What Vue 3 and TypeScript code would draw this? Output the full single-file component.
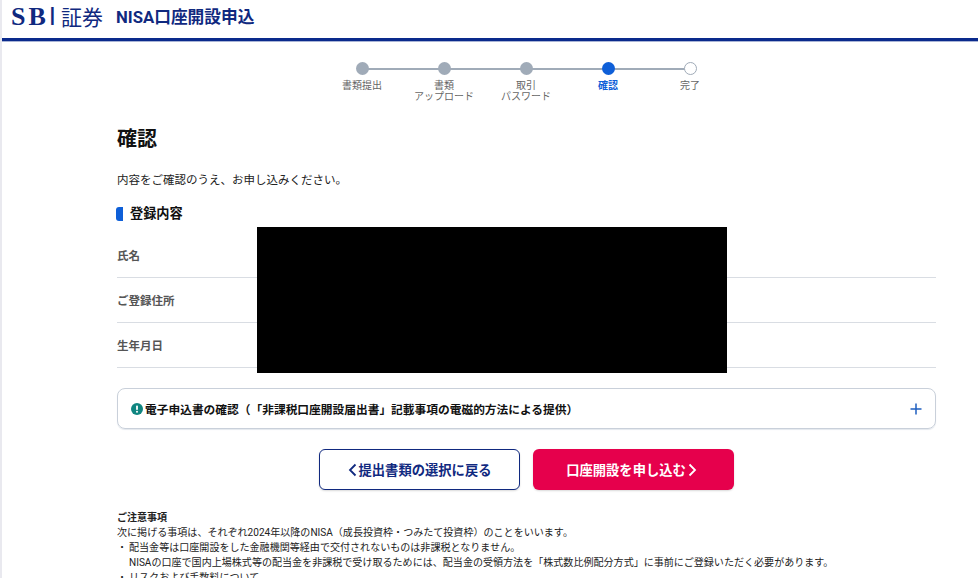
<template>
  <div class="page">
    <header class="site-header">
      <div class="logo">
        <span class="logo__sbi">SB<span class="logo__i">I</span></span>
        <span class="logo__sec">証券</span>
      </div>
      <span class="site-header__title">NISA口座開設申込</span>
    </header>

    <nav class="stepper">
      <div v-for="(step, i) in steps" :key="i" class="step" :class="step.state">
        <span class="step__dot"></span>
        <span class="step__label">
          <template v-for="(line, j) in step.lines" :key="j">{{ line }}<br /></template>
        </span>
      </div>
    </nav>

    <main class="content">
      <h1 class="content__title">確認</h1>
      <p class="content__lead">内容をご確認のうえ、お申し込みください。</p>
      <h2 class="section-title">登録内容</h2>

      <dl class="info">
        <div v-for="row in rows" :key="row" class="info__row">
          <dt>{{ row }}</dt>
          <dd></dd>
        </div>
        <div class="info__mask"></div>
      </dl>

      <div class="accordion">
        <svg class="accordion__icon" width="12" height="12" viewBox="0 0 12 12">
          <circle cx="6" cy="6" r="6" fill="#0f8580" />
          <rect x="5.1" y="2.4" width="1.8" height="4.6" rx=".8" fill="#fff" />
          <circle cx="6" cy="8.7" r="1" fill="#fff" />
        </svg>
        <span class="accordion__text">電子申込書の確認（「非課税口座開設届出書」記載事項の電磁的方法による提供）</span>
        <svg class="accordion__plus" width="12" height="12" viewBox="0 0 12 12">
          <path d="M6 .5v11M.5 6h11" stroke="#1f5fc0" stroke-width="1.5" fill="none" />
        </svg>
      </div>

      <div class="actions">
        <button class="btn btn--back">
          <svg width="9" height="14" viewBox="0 0 9 14"><path d="M7.5 1.5 2 7l5.5 5.5" stroke="#10297f" stroke-width="1.8" fill="none" /></svg>
          提出書類の選択に戻る
        </button>
        <button class="btn btn--apply">
          口座開設を申し込む
          <svg width="9" height="14" viewBox="0 0 9 14"><path d="M1.5 1.5 7 7l-5.5 5.5" stroke="#fff" stroke-width="1.8" fill="none" /></svg>
        </button>
      </div>

      <section class="notes">
        <h3>ご注意事項</h3>
        <p>次に掲げる事項は、それぞれ2024年以降のNISA（成長投資枠・つみたて投資枠）のことをいいます。</p>
        <ul>
          <li>配当金等は口座開設をした金融機関等経由で交付されないものは非課税となりません。<br />NISAの口座で国内上場株式等の配当金を非課税で受け取るためには、配当金の受領方法を「株式数比例配分方式」に事前にご登録いただく必要があります。</li>
          <li>リスクおよび手数料について</li>
        </ul>
      </section>
    </main>
  </div>
</template>

<script setup lang="ts">
type Step = { lines: string[]; state: string }

const steps: Step[] = [
  { lines: ['書類提出'], state: 'is-done' },
  { lines: ['書類', 'アップロード'], state: 'is-done' },
  { lines: ['取引', 'パスワード'], state: 'is-done' },
  { lines: ['確認'], state: 'is-current' },
  { lines: ['完了'], state: 'is-todo' },
]

const rows = ['氏名', 'ご登録住所', '生年月日']
</script>

<style>
html, body { margin: 0; background: #fff; overflow: hidden; }
</style>

<style scoped>
.page { height: 578px; overflow: hidden; border-left: 2px solid #e9e9ef; background: #fff; color: #1a1a1a; font-family: "Roboto", "Noto Sans CJK JP", sans-serif; text-spacing-trim: space-all; }

.site-header { display: flex; align-items: center; gap: 13px; height: 38px; padding: 0 0 0 9px; border-bottom: 3px solid #0a2a8c; box-shadow: 0 1px 0 #a9b4d6; color: #10297f; }
.logo { display: flex; align-items: center; gap: 2px; margin-top: -6px; }
.logo__sbi { font-family: "Liberation Serif", serif; font-size: 26px; font-weight: 700; line-height: 1; letter-spacing: 3px; }
.logo__i { font-family: "Liberation Sans", sans-serif; font-weight: 400; }
.logo__sec { font-family: "Noto Sans CJK JP", sans-serif; font-size: 21px; line-height: 1; }
.site-header__title { margin-top: -6px; font-size: 16.7px; font-weight: 700; }

.stepper { display: flex; justify-content: center; margin: 21px 0 0 72px; }
.step { position: relative; display: flex; flex-direction: column; align-items: center; width: 82px; }
.step::after { content: ""; position: absolute; top: 6px; left: 41px; width: 82px; height: 2px; background: #a0abb8; }
.step:last-child::after { display: none; }
.step__dot { position: relative; z-index: 1; box-sizing: border-box; width: 13px; height: 13px; border-radius: 50%; background: #a0abb8; }
.step__label { margin-top: 5px; color: #666; font-size: 10px; line-height: 11px; text-align: center; }
.is-current .step__dot { background: #0e5fd8; }
.is-current .step__label { color: #0e5fd8; font-weight: 700; }
.is-todo .step__dot { border: 1.5px solid #a0abb8; background: #fff; }

.content { margin: 0 42px 0 115px; }
.content__title { margin: 22px 0 0; color: #111; font-size: 20px; font-weight: 700; line-height: 30px; }
.content__lead { margin: 18px 0 0; color: #222; font-size: 11.5px; line-height: 17px; }
.section-title { display: flex; align-items: center; gap: 7px; margin: 16px 0 0 -1px; color: #111; font-size: 13.2px; font-weight: 700; line-height: 18px; }
.section-title::before { content: ""; width: 7px; height: 14px; border-radius: 3px 0 0 3px; background: #0e5fd8; }

.info { position: relative; margin: 9px 0 0; padding-top: 1px; }
.info__row { display: flex; align-items: center; height: 44px; border-bottom: 1px solid #d9dde3; }
.info__row dt { color: #555; font-size: 11.5px; font-weight: 700; }
.info__row dd { margin: 0; }
.info__mask { position: absolute; top: -5px; left: 140px; width: 470px; height: 146px; background: #000; }

.accordion { display: flex; align-items: center; gap: 2px; height: 39px; margin-top: 20px; padding: 0 13px; border: 1px solid #c9d0da; border-radius: 8px; box-shadow: 0 1px 1px #e4e8ee; }
.accordion__text { flex: 1; color: #111; font-size: 11.72px; font-weight: 700; }

.actions { display: flex; justify-content: center; gap: 13px; margin-top: 20px; }
.btn { display: flex; align-items: center; justify-content: center; gap: 2px; box-sizing: border-box; width: 201px; height: 41px; border-radius: 6px; font-family: inherit; font-size: 13.3px; font-weight: 700; box-shadow: 0 1px 2px rgba(0, 0, 0, .15); }
.btn--back { border: 1px solid #10297f; background: #fff; color: #10297f; }
.btn--apply { padding: 0 4px 0 0; border: 0; background: #e6004c; color: #fff; }

.notes { margin-top: 20px; color: #222; font-size: 10.05px; line-height: 15px; }
.notes h3 { margin: 0; font-size: 10px; font-weight: 700; }
.notes p { margin: 0; }
.notes ul { margin: 0; padding: 0; list-style: none; }
.notes li { position: relative; padding-left: 12px; }
.notes li::before { content: "・"; position: absolute; left: 0; }
</style>
